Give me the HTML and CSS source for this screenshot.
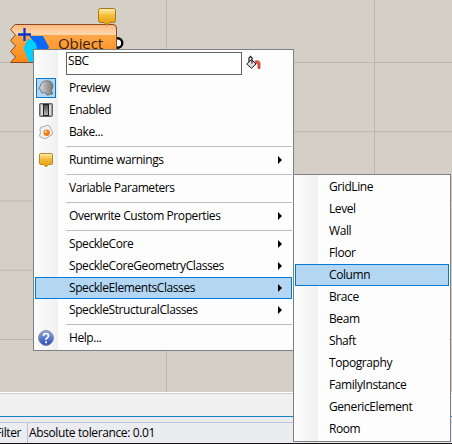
FILE: index.html
```html
<!DOCTYPE html>
<html lang="en"><head><meta charset="utf-8"><title>Canvas</title><link rel="stylesheet" href="styles.css"></head>
<body>
<main class="canvas">
<svg class="component" width="130" height="66" viewBox="0 0 130 66">
<defs>
<linearGradient id="body" x1="0" y1="0" x2="0" y2="1"><stop offset="0" stop-color="#fbb87a"/><stop offset=".26" stop-color="#fdd8b0"/><stop offset=".29" stop-color="#fda648"/><stop offset="1" stop-color="#fc8a14"/></linearGradient>
<linearGradient id="gold" x1="0" y1="0" x2="0" y2="1"><stop offset="0" stop-color="#fff0b0"/><stop offset=".4" stop-color="#f3c03c"/><stop offset="1" stop-color="#e59a00"/></linearGradient>
</defs>
<circle cx="117.500" cy="43" r="4.800" fill="#fff" stroke="#000" stroke-width="2.400"/>
<path d="M15 24.500H113Q116.500 24.500 116.500 28V59Q116.500 62.500 113 62.500H10.500L15.500 57L10.500 51.500L15.500 46L10.500 40.500L15.500 35L10.500 29.500Z" fill="url(#body)" stroke="#8f4326"/>
<path d="M23.500 48L28 39L36 41L39 54L36 62H29Z" fill="#00d0ff"/><path d="M29 36H43L49 47L45 56H39L36 44Z" fill="#0868f8"/><path d="M36 48L39 54L36 62H33Z" fill="#0a3fc8"/>
<path d="M24.500 28V41M18 34.500H31" stroke="#0b36c8" stroke-width="2.300"/>
<path d="M100.500 8.500H113.500Q115.500 8.500 115.500 10.500V20.500Q115.500 22.500 113.500 22.500H110L107 25.500L104 22.500H100.500Q98.500 22.500 98.500 20.500V10.500Q98.500 8.500 100.500 8.500Z" fill="url(#gold)" stroke="#a87518"/>
</svg>
<span class="component-name">Object</span>
</main>
<footer class="dock"><div class="panel"></div><div class="status"><span class="filter">Filter</span><span class="tolerance">Absolute tolerance: 0.01</span></div></footer>

<div class="menu main-menu">
<div class="name-row"><div class="name-box">SBC</div>
<svg width="16" height="16" viewBox="0 0 16 16"><path d="M.7 9L5.500 4.500L10 9L5.500 13.300Z" fill="#ddd" stroke="#222"/><path d="M3 7V3L4.500 1.300L6 3V8.500" fill="none" stroke="#222" stroke-width="1.200"/><path d="M9 6Q14 5 14 8.500V13.500H12V9.500L10 8Z" fill="#ee5a40" stroke="#b82a18" stroke-width=".7"/></svg></div>
<div class="item"><i class="icon checked"><svg width="16" height="16" viewBox="0 0 16 16"><defs><linearGradient id="grey"><stop stop-color="#ddd"/><stop offset="1" stop-color="#777"/></linearGradient></defs><path d="M9 .8Q14.500 .8 15 6Q15 8 13.500 10L14.500 14L9 15.200L7.500 12.800H3.500L2.500 9.500L.8 9L2.300 6Q3 1 9 .8Z" fill="url(#grey)" stroke="#666" stroke-width=".8"/></svg></i><span>Preview</span></div>
<div class="item"><i class="icon"><svg width="16" height="16" viewBox="0 0 16 16"><defs><linearGradient id="switch" x1="0" y1="0" x2="0" y2="1"><stop stop-color="#444"/><stop offset="1" stop-color="#bbb"/></linearGradient></defs><rect x="1.500" y="1.500" width="13" height="13" rx="1" fill="#999" stroke="#666"/><path d="M4 3V13M12 3V13" stroke="#ddd" stroke-width="2"/><rect x="5.500" y="2.500" width="5" height="11" fill="url(#switch)" stroke="#222"/></svg></i><span>Enabled</span></div>
<div class="item"><i class="icon"><svg width="16" height="16" viewBox="0 0 16 16"><path d="M3 3Q6 3 8 1.500Q12 .5 12.500 4.500Q16 8 14 11Q11 12 9 14Q6 15.500 4 13.500Q0 13 2.500 9Q1 5 3 3Z" fill="#f0f0f0" stroke="#999" stroke-width=".8"/><circle cx="8.700" cy="8.800" r="3.200" fill="#f57c16"/><circle cx="7.800" cy="7.700" r="1.300" fill="#ffd392"/></svg></i><span>Bake...</span></div>
<hr>
<div class="item sub"><i class="icon"><svg width="16" height="16" viewBox="0 0 16 16"><path d="M2.500 1.500H13.500Q14.500 1.500 14.500 3V11Q14.500 12.500 13 12.500H10.500L8 15L5.500 12.500H3Q1.500 12.500 1.500 11V3Q1.500 1.500 2.500 1.500Z" fill="url(#gold)" stroke="#b88932"/></svg></i><span>Runtime warnings</span></div>
<hr><div class="item"><i class="icon"></i><span>Variable Parameters</span></div>
<hr><div class="item sub"><i class="icon"></i><span>Overwrite Custom Properties</span></div>
<hr><div class="item sub"><i class="icon"></i><span>SpeckleCore</span></div>
<div class="item sub"><i class="icon"></i><span>SpeckleCoreGeometryClasses</span></div>
<div class="item sub active"><i class="icon"></i><span>SpeckleElementsClasses</span></div>
<div class="item sub"><i class="icon"></i><span>SpeckleStructuralClasses</span></div>
<hr><div class="item"><i class="icon"><svg width="16" height="16" viewBox="0 0 16 16"><defs><linearGradient id="blue" x1="0" y1="0" x2="0" y2="1"><stop stop-color="#91afe8"/><stop offset="1" stop-color="#2548b5"/></linearGradient></defs><circle cx="8" cy="8" r="7.400" fill="url(#blue)" stroke="#7e8698"/><path d="M5.500 6Q5.500 3.500 8 3.500T10.500 6Q10.500 7.200 9 8Q8 8.600 8 10" fill="none" stroke="#fff" stroke-width="1.700"/><circle cx="8" cy="12.300" r="1.100" fill="#fff"/></svg></i><span>Help...</span></div>
</div>

<div class="menu class-menu">
<div class="item"><span>GridLine</span></div><div class="item"><span>Level</span></div><div class="item"><span>Wall</span></div><div class="item"><span>Floor</span></div><div class="item active"><span>Column</span></div><div class="item"><span>Brace</span></div><div class="item"><span>Beam</span></div><div class="item"><span>Shaft</span></div><div class="item"><span>Topography</span></div><div class="item"><span>FamilyInstance</span></div><div class="item"><span>GenericElement</span></div><div class="item"><span>Room</span></div>
</div>
</body></html>
```
FILE: styles.css
```css
*{box-sizing:border-box}
body{margin:0;width:452px;height:444px;overflow:hidden;position:relative;font:12px/22px "Open Sans","Noto Sans",sans-serif;letter-spacing:-.42px;color:#000;background:#d4d0c8;display:flex;flex-direction:column;white-space:nowrap}
.canvas{height:393px;position:relative;background:linear-gradient(#bbb8b0,#bbb8b0) 166px 0/1px 100% no-repeat,linear-gradient(#bbb8b0,#bbb8b0) 374px 0/1px 100% no-repeat,linear-gradient(#bbb8b0 1px,transparent 1px) 0 62px/100% 69.25px #d4d0c8}
.component{position:absolute;left:0;top:0}
.component-name{position:absolute;left:58px;top:32px;font-size:15px;letter-spacing:-.1px;color:#3c1e08}
.dock{flex:1;display:flex;flex-direction:column;background:#ebecf0;border-top:1px solid #fff}
.panel{height:24px;background:#f0f0f0;border-top:1px solid #d2d0d5;border-bottom:1px solid #1c80c8}
.status{flex:1;display:flex;margin-top:5px;border-top:1px solid #c3c6d8;border-bottom:1px solid #150c10;line-height:20px}
.filter{width:28px;border-right:1px solid #b9bed0;display:flex;justify-content:flex-end;padding-right:6px}
.tolerance{padding-left:1px;letter-spacing:-.38px}
.menu{position:absolute;border:1px solid #808080;background:linear-gradient(90deg,#fcfcfc 2px,#f0f0f0 24px,#fdfdfd 24px);padding:1px}
.main-menu{left:33px;top:49px;width:261px;height:302px}
.class-menu{left:293px;top:174px;width:158px;height:268px}
.name-row{display:flex;padding:1px 0 0 31px;height:26px;gap:4px}
.name-box{width:176px;height:23px;border:1px solid #646464;background:#fff;padding-left:1px;line-height:15px}
.name-row svg{margin-top:3px}
.item{height:22px;display:flex;align-items:center;position:relative;border:1px solid transparent;line-height:20px}
.active{background:#b3d7f3;border-color:#0078d7}
.icon{width:20px;height:20px;display:flex;align-items:center;justify-content:center}
.checked{background:#b3d7f3;border:1px solid #0078d7}
.icon+span{margin-left:13px}
.class-menu span{margin-left:33px}
.sub::after{content:"";margin-left:auto;margin-right:9px;border-left:4px solid #000;border-top:4px solid transparent;border-bottom:4px solid transparent}
hr{height:1px;margin:3px 0 2px 31px;border:0;background:#bdbdbd}
```
